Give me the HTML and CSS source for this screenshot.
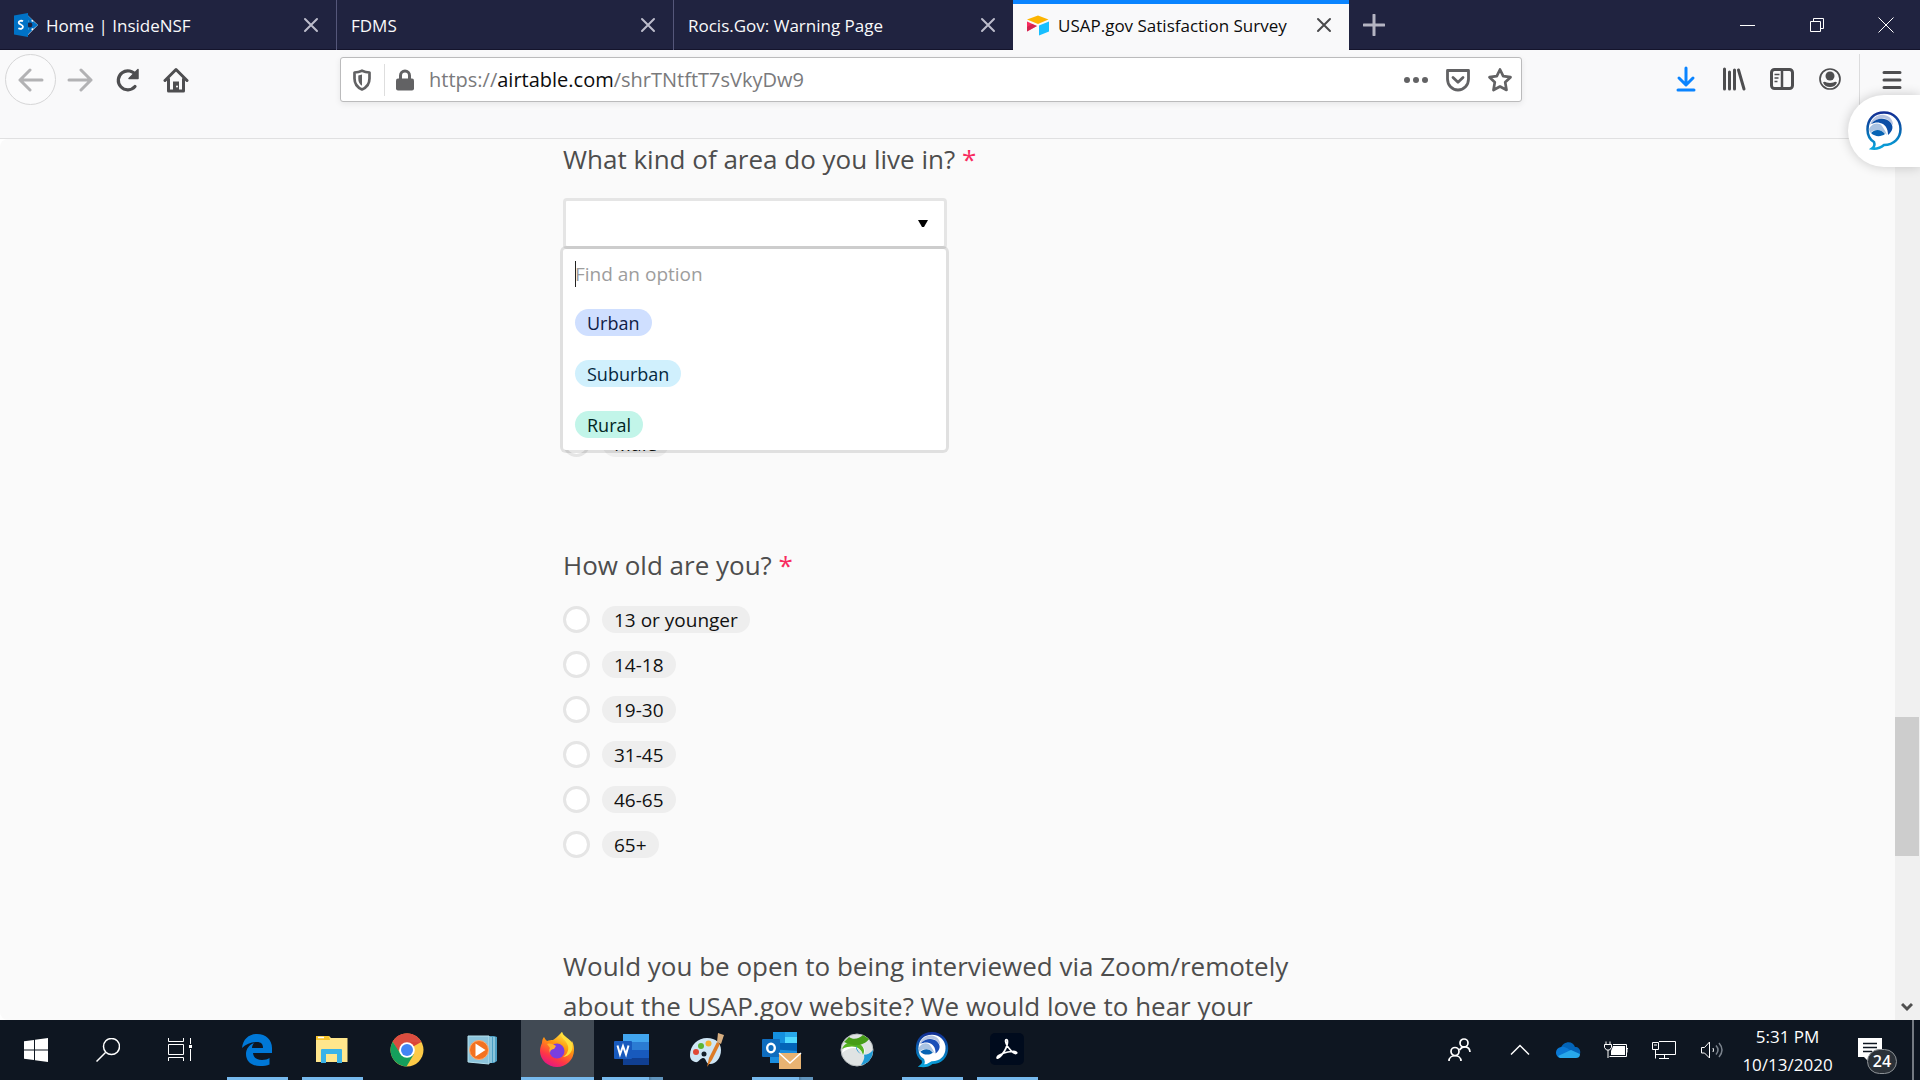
FILE: index.html
```html
<!DOCTYPE html>
<html lang="en">
<head>
<meta charset="utf-8">
<title>USAP.gov Satisfaction Survey</title>
<link rel="stylesheet" href="styles.css">
</head>
<body>
<header class="tabbar">
  <div class="tab">
    <svg class="favicon" viewBox="0 0 24 24"><path d="M14 2.500L24 12 14 22z" fill="#fff"/><path d="M14 2.500l4 4-1.500 3-2.500-2zM14 21.500l4-4-1.500-3-2.500 2zM19 8l5 4-5 4z" fill="#0072c6"/><circle cx="16" cy="12" r="3.200" fill="#20233f" stroke="#0072c6" stroke-width="1.500"/><path d="M0 2.500L14 0v24L0 21.500z" fill="#0072c6"/><path d="M9 8.300C7.500 7.300 4.600 7.600 4.700 9.600c.1 2.100 4.300 1.800 4.300 4.200 0 2.300-3 2.400-4.600 1.500" fill="none" stroke="#fff" stroke-width="1.800"/></svg>
    <span class="tab-title">Home | InsideNSF</span>
    <button class="tab-close" aria-label="Close tab"><svg width="16" height="16" viewBox="0 0 16 16"><path d="M2 2l12 12M14 2L2 14"/></svg></button>
  </div>
  <div class="tab">
    <span class="tab-title">FDMS</span>
    <button class="tab-close" aria-label="Close tab"><svg width="16" height="16" viewBox="0 0 16 16"><path d="M2 2l12 12M14 2L2 14"/></svg></button>
  </div>
  <div class="tab">
    <span class="tab-title">Rocis.Gov: Warning Page</span>
    <button class="tab-close" aria-label="Close tab"><svg width="16" height="16" viewBox="0 0 16 16"><path d="M2 2l12 12M14 2L2 14"/></svg></button>
  </div>
  <div class="tab tab-active">
    <svg class="favicon" viewBox="0 0 24 24"><path d="M1 6.500L12 2.500l10.500 4L12 11z" fill="#fcb400"/><path d="M13 12.500L23 8.500v10L13 22.500z" fill="#18bfff"/><path d="M1 8.500l10 4.500-10 5.500z" fill="#f82b60"/><path d="M1 18.500V14l5-3 5 2z" fill="#ba1e45" opacity=".6"/></svg>
    <span class="tab-title">USAP.gov Satisfaction Survey</span>
    <button class="tab-close" aria-label="Close tab"><svg width="16" height="16" viewBox="0 0 16 16"><path d="M2 2l12 12M14 2L2 14"/></svg></button>
  </div>
  <button class="new-tab" aria-label="New tab"><svg width="22" height="22" viewBox="0 0 22 22"><path d="M11 1v20M1 11h20" stroke="#b4b4c2" stroke-width="3" stroke-linecap="round"/></svg></button>
  <div class="window-controls">
    <button aria-label="Minimize"><svg width="16" height="16" viewBox="0 0 16 16"><path d="M0 8.500h15"/></svg></button>
    <button aria-label="Restore"><svg width="16" height="16" viewBox="0 0 16 16"><path d="M1.500 4.500h10v10h-10zM4.500 4.500v-3h10v10h-3"/></svg></button>
    <button aria-label="Close"><svg width="16" height="16" viewBox="0 0 16 16"><path d="M.5 .5l15 15M15.500 .5l-15 15"/></svg></button>
  </div>
</header>

<nav class="toolbar" aria-label="Navigation">
  <div class="nav-buttons">
    <button class="back" aria-label="Back"><svg width="26" height="24" viewBox="0 0 26 24"><path d="M24 12H2M12 2L2 12l10 10"/></svg></button>
    <button class="forward" aria-label="Forward"><svg width="26" height="24" viewBox="0 0 26 24"><path d="M2 12h22M14 2l10 10-10 10"/></svg></button>
    <button aria-label="Reload"><svg width="24" height="24" viewBox="0 0 24 24"><path d="M19 18.500a9.500 9.500 0 1 1 1-11" fill="none" stroke="#4e4e50" stroke-width="3.200" stroke-linecap="round"/><path d="M22 1.500v9h-9z" fill="#4e4e50" stroke="#4e4e50" stroke-width="1.500" stroke-linejoin="round"/></svg></button>
    <button aria-label="Home"><svg width="26" height="26" viewBox="0 0 26 26"><path d="M2 13.500L13 2.500l11 11M5.500 12v12h15V12" fill="none" stroke="#4e4e50" stroke-width="3" stroke-linejoin="round" stroke-linecap="round"/><path d="M10 24v-9.500h6V24z" fill="#4e4e50"/><circle cx="14" cy="19.500" r="1" fill="#fff"/></svg></button>
  </div>
  <div class="urlbar">
    <svg width="20" height="22" viewBox="0 0 20 22"><path d="M2.500 3.500Q6.500 3.200 10 1.700q3.500 1.500 7.500 1.800v6c0 5-3 9-7.500 11-4.500-2-7.500-6-7.500-11z" fill="none" stroke="#626264" stroke-width="2.700" stroke-linejoin="round"/><path d="M10 5.500v11.200c-2.500-1.600-3.700-4-3.700-7V6.500z" fill="#626264"/></svg>
    <span class="url-divider"></span>
    <svg width="20" height="22" viewBox="0 0 20 22"><path d="M5.500 10V6.500a4.500 4.500 0 0 1 9 0V10" fill="none" stroke="#626264" stroke-width="3"/><rect x="1" y="9.500" width="18" height="12" rx="2" fill="#626264"/></svg>
    <div class="url" role="textbox" aria-label="Address" contenteditable="true" spellcheck="false">https://<b>airtable.com</b>/shrTNtftT7sVkyDw9</div>
    <button aria-label="Page actions"><svg width="26" height="24" viewBox="0 0 26 24" fill="#626264"><circle cx="4" cy="12" r="3"/><circle cx="13" cy="12" r="3"/><circle cx="22" cy="12" r="3"/></svg></button>
    <button aria-label="Save to Pocket"><svg width="26" height="24" viewBox="0 0 26 24" fill="none" stroke="#626264" stroke-width="2.800" stroke-linecap="round" stroke-linejoin="round"><path d="M2.500 2.500h21V11c0 6-4.500 11-10.500 11S2.500 17 2.500 11z"/><path d="M8 9.500l5 4.700 5-4.700"/></svg></button>
    <button aria-label="Bookmark"><svg width="26" height="26" viewBox="0 0 26 26"><path d="M13 2.500l3.200 6.700 7.300 1-5.300 5.100 1.300 7.700-6.500-3.500L6.500 23l1.300-7.700L2.500 10.200l7.300-1z" fill="none" stroke="#626264" stroke-width="2.700" stroke-linejoin="round"/></svg></button>
  </div>
  <div class="tools">
    <button aria-label="Downloads"><svg width="22" height="26" viewBox="0 0 22 26" fill="none" stroke="#0a84ff" stroke-width="3" stroke-linecap="round" stroke-linejoin="round"><path d="M11 2v16M4 12l7 7 7-7M3 24h16"/></svg></button>
    <button aria-label="Library"><svg width="24" height="24" viewBox="0 0 24 24" fill="none" stroke="#4e4e50" stroke-width="3" stroke-linecap="round"><path d="M2.500 2v20M7.500 5v17M12.500 3v19M16.500 3l5.500 19"/></svg></button>
    <button aria-label="Sidebars"><svg width="26" height="24" viewBox="0 0 26 24" fill="none" stroke="#4e4e50"><rect x="2.500" y="2.500" width="21" height="19" rx="3" stroke-width="3"/><path d="M13 2v20" stroke-width="2.500"/><path d="M5.500 7.500h5M5.500 11h4M5.500 14.500h3" stroke-width="1.500"/></svg></button>
    <button aria-label="Account"><svg width="24" height="24" viewBox="0 0 24 24"><circle cx="12" cy="12" r="10" fill="none" stroke="#4e4e50" stroke-width="1.700"/><circle cx="12" cy="9" r="4.500" fill="#4e4e50"/><path d="M5 15.500c2-2 3 .5 7 .5s5-2.500 7-.5c-1 3-4 4.500-7 4.500s-6-1.500-7-4.500z" fill="#4e4e50"/></svg></button>
    <button class="menu" aria-label="Menu"><svg width="20" height="20" viewBox="0 0 20 20" stroke="#4e4e50" stroke-width="3" stroke-linecap="round"><path d="M2 2.500h16M2 10h16M2 17.500h16"/></svg></button>
  </div>
  <button class="chat-widget" aria-label="Open chat">
    <svg width="36" height="40" viewBox="0 0 36 40"><defs><linearGradient id="jab" x1="0" y1="0" x2="0" y2="1"><stop offset="0" stop-color="#132f95"/><stop offset=".5" stop-color="#0763ae"/><stop offset="1" stop-color="#0aa5dd"/></linearGradient></defs><path d="M8 31C3 28 1.500 23 1.500 18.500 1.500 8 8 1.500 18 1.500S34.500 9 34.500 18 28 34 18 34c-3 2.500-8 4-12 3.500 2-1.500 3-4 2-6.500z" fill="#fff" stroke="url(#jab)" stroke-width="2.500"/><path d="M4 14C6 7 12 3 18 4c6 1 9 5 9 10l-5-5C17 6 9 8 4 14z" fill="#b5c3e2"/><path d="M5 13c5-6 14-7 19-2 4 4 3 9-2 13 0-7-3-11-8-12-3-1-6 0-9 1z" fill="#0b4ea6"/><path d="M3 18c3-6 10-7 13-3 2 3 4 6 5 9-3-3-6-5-10-5-3 0-5 1-7 3z" fill="#a9c3e2"/><path d="M5 22c4-4 10-4 14 1-4 3-10 3-14-1z" fill="#0764b4"/></svg>
  </button>
</nav>

<div class="viewport">
  <main class="page">
    <form class="survey">
      <section class="question">
        <h2 id="area-title">What kind of area do you live in? <span class="required">*</span></h2>
        <div class="picker">
          <button type="button" class="picker-button" aria-labelledby="area-title" aria-expanded="true"><svg width="10" height="7" viewBox="0 0 10 7"><path d="M0 0h10L6 7H4z" fill="#000"/></svg></button>
          <div class="picker-menu">
            <input class="picker-search" type="text" placeholder="Find an option" aria-label="Find an option">
            <span class="cursor"></span>
            <ul>
              <li><button type="button" class="pill urban">Urban</button></li>
              <li><button type="button" class="pill suburban">Suburban</button></li>
              <li><button type="button" class="pill rural">Rural</button></li>
            </ul>
          </div>
        </div>
      </section>
      <section class="question covered">
        <label class="option"><input type="radio" name="gender"><span class="pill">Male</span></label>
      </section>
      <section class="question">
        <h2>How old are you? <span class="required">*</span></h2>
        <div class="options">
          <label class="option"><input type="radio" name="age"><span class="pill">13 or younger</span></label>
          <label class="option"><input type="radio" name="age"><span class="pill">14-18</span></label>
          <label class="option"><input type="radio" name="age"><span class="pill">19-30</span></label>
          <label class="option"><input type="radio" name="age"><span class="pill">31-45</span></label>
          <label class="option"><input type="radio" name="age"><span class="pill">46-65</span></label>
          <label class="option"><input type="radio" name="age"><span class="pill">65+</span></label>
        </div>
      </section>
      <section class="question">
        <h2>Would you be open to being interviewed via Zoom/remotely about the USAP.gov website? We would love to hear your</h2>
      </section>
    </form>
  </main>
  <div class="scrollbar">
    <div class="scroll-thumb"></div>
    <svg width="12" height="10" viewBox="0 0 12 10"><path d="M1 2l5 5 5-5" fill="none" stroke="#505050" stroke-width="3"/></svg>
  </div>
</div>

<footer class="taskbar">
  <div class="system-buttons">
    <button aria-label="Start"><svg width="24" height="24" viewBox="0 0 24 24" fill="#fff"><path d="M0 3.300L10 2v9.500H0zM11 1.800L24 0v11.500H11zM0 12.500h10V22L0 20.700zM11 12.500h13V24l-13-1.800z"/></svg></button>
    <button aria-label="Search"><svg width="24" height="24" viewBox="0 0 24 24" fill="none" stroke="#fff" stroke-width="1.500"><circle cx="15.500" cy="8.500" r="8"/><path d="M9.500 14.500L.5 23.500"/></svg></button>
    <button aria-label="Task view"><svg width="24" height="24" viewBox="0 0 24 24" fill="none" stroke="#fff"><path d="M.5 0v3.500h15V0M.5 6.500h15v10h-15zM.5 23v-3.500h15V23M22.500 0v6M22.500 11v12"/><path d="M21 7h3v3h-3z" fill="#fff" stroke="none"/></svg></button>
  </div>
  <div class="apps">
    <button class="app running" aria-label="Edge"><svg width="32" height="34" viewBox="0 0 32 34"><path d="M1 15C2 6 8 1 16 1c9 0 15 6 15 14v5H12c.5 5 4 7 9 7 3 0 6-1 7.500-2v6.500C26 32.500 23 33 19 33 10 33 5 28 5 21c0-5 3-9 8-11-1 1-2 3-2 5h11c0-4-2-6-6-6-6 0-11 2-15 6z" fill="#0078d7"/></svg></button>
    <button class="app running" aria-label="File Explorer"><svg width="34" height="30" viewBox="0 0 34 30"><path d="M1 1h13l2 2h16.500v24H1z" fill="#ffe68c"/><path d="M1 1h13l1 4H1z" fill="#f8c52c"/><path d="M3 2.500h6" stroke="#fff" stroke-width="1.500"/><path d="M6 15q0-1 1-1h19q1 0 1 1v13h-5v-9H11v9H6z" fill="#3ab3e8"/></svg></button>
    <button class="app" aria-label="Chrome"><svg width="34" height="34" viewBox="0 0 34 34"><circle cx="17" cy="17" r="16.500" fill="#fcca47"/><path d="M17 17L2.700 8.700A16.500 16.500 0 0 1 31.300 9z" fill="#db4437"/><path d="M17 9h14.500a16.500 16.500 0 0 0-28.800-.300L8 18z" fill="#db4d40"/><path d="M2.700 8.700A16.500 16.500 0 0 0 16.500 33.500L24 21l-7 3-7-4z" fill="#159f5c"/><circle cx="17" cy="17" r="7.800" fill="#fff"/><circle cx="17" cy="17" r="6" fill="#4285f4"/></svg></button>
    <button class="app" aria-label="Media Player"><svg width="30" height="30" viewBox="0 0 30 30"><path d="M8 1h19l3 1v24l-3 2H8z" fill="#4d9fc4"/><path d="M24 2v26M27 2v25" stroke="#c8ebf5"/><path d="M1 1h21v28L1 27z" fill="#8cc4dc" stroke="#b6e1ee"/><circle cx="12" cy="15" r="9.500" fill="#f37221" stroke="#ffad71"/><path d="M8.500 8.500l10 6.500-10 6.500z" fill="#fff"/></svg></button>
    <button class="app running active" aria-label="Firefox"><svg width="36" height="36" viewBox="0 0 36 36"><defs><linearGradient id="fox" x1=".8" y1="0" x2=".3" y2="1"><stop offset="0" stop-color="#fff44f"/><stop offset=".4" stop-color="#ff980e"/><stop offset=".75" stop-color="#ff3647"/><stop offset="1" stop-color="#e31587"/></linearGradient></defs><path d="M3 11c0-3 1-5 2-6 1 2 2 3 3 4 2-1 4-1 6-1 2-1 4-3 9-8 1 4 6 6 8 10l1 1 1-2c2 4 2 7 2 9 0 10-8 17-17 17S1 28 1 19c0-3 1-6 2-8z" fill="url(#fox)"/><circle cx="18" cy="19" r="7.500" fill="#7a3ee0"/><path d="M8 12c4-1 6 0 9 2l-2 3c-2 0-4 1-4 4-1-2-1-4 0-5z" fill="#ffb02e"/><path d="M23 0c-4 5 5 8 6 14 1 4-1 9-5 11 7-1 11-7 9-14C31 6 24 5 23 0z" fill="#ffdf3c"/></svg></button>
    <button class="app running stacked" aria-label="Word"><svg width="36" height="34" viewBox="0 0 36 34"><path d="M9 1h26v8H9z" fill="#41a5ee"/><path d="M9 9h26v8H9z" fill="#2b7cd3"/><path d="M9 17h26v8H9z" fill="#185abd"/><path d="M9 25h26v7H9z" fill="#103f91"/><rect y="8" width="18" height="18" rx="1" fill="#185abd"/><path d="M3.500 12.500l2.500 9 3-8.500 3 8.500 2.500-9" fill="none" stroke="#fff" stroke-width="2"/></svg></button>
    <button class="app" aria-label="Paint"><svg width="36" height="36" viewBox="0 0 36 36"><path d="M1 23C1 13 9 6 18 6c9 0 14 5 14 12 0 8-5 14-11 14-5 0-3-6-7-6-3 0-4 5-8 4-3-1-5-3-5-7z" fill="#cfe6f5"/><circle cx="7" cy="20" r="3" fill="#e04836"/><circle cx="12" cy="14" r="3" fill="#5cb531"/><circle cx="19.500" cy="11.500" r="3" fill="#f5b12f"/><circle cx="15" cy="22" r="2.500" fill="#13202c"/><path d="M18 35l2-9 8-16 3 2-8 16z" fill="#dc7b26"/><path d="M28 10l1-9 6 2-3 9z" fill="#d7ae80"/></svg></button>
    <button class="app running stacked" aria-label="Outlook"><svg width="40" height="38" viewBox="0 0 40 38"><path d="M11 1h12v11H11z" fill="#1490df"/><path d="M23 1h12v11H23z" fill="#28a8ea"/><path d="M11 12h24v11H11z" fill="#0364b8"/><path d="M23 6h12v6H23z" fill="#50d9ff"/><path d="M8 18l27 2v12H8z" fill="#1a8ee0"/><rect y="8" width="18" height="18" rx="1" fill="#0f6cbd"/><ellipse cx="9" cy="17" rx="3.800" ry="4.300" fill="none" stroke="#fff" stroke-width="2.400"/><path d="M17 22h22v16H17z" fill="#e8b372"/><path d="M17 22l11 10 11-10" fill="none" stroke="#fff" stroke-width="1.500"/></svg></button>
    <button class="app" aria-label="AnyConnect"><svg width="34" height="34" viewBox="0 0 34 34"><circle cx="17" cy="17" r="16" fill="#dfe3e3" stroke="#b8bdbe"/><path d="M2 20C4 11 13 8 21 12c4 2 5 7 2 11-1-9-12-11-21-3z" fill="#fff"/><path d="M2 16C5 9 14 6 20 11c4 3 5 7 3 11-2-8-10-11-21-6z" fill="#55b321"/><path d="M4 9l5-5c4 3 10 2 14-2l6 4C24 13 14 14 4 9z" fill="#469d18"/><path d="M16 12c2 11 10 13 17 5 0 8-5 14-12 15 2-3 4-7 3-10-5-1-9-5-8-10z" fill="#219ad5"/></svg></button>
    <button class="app running" aria-label="Jabber"><svg width="34" height="36" viewBox="0 0 36 40"><path d="M8 31C3 28 1.500 23 1.500 18.500 1.500 8 8 1.500 18 1.500S34.500 9 34.500 18 28 34 18 34c-3 2.500-8 4-12 3.500 2-1.500 3-4 2-6.500z" fill="#fff" stroke="url(#jab)" stroke-width="3"/><path d="M4 14C6 7 12 3 18 4c6 1 9 5 9 10l-5-5C17 6 9 8 4 14z" fill="#b5c3e2"/><path d="M5 13c5-6 14-7 19-2 4 4 3 9-2 13 0-7-3-11-8-12-3-1-6 0-9 1z" fill="#1a4fb8"/><path d="M3 18c3-6 10-7 13-3 2 3 4 6 5 9-3-3-6-5-10-5-3 0-5 1-7 3z" fill="#a9c3e2"/><path d="M5 22c4-4 10-4 14 1-4 3-10 3-14-1z" fill="#0764b4"/></svg></button>
    <button class="app running" aria-label="Acrobat"><svg width="34" height="34" viewBox="0 0 34 34"><rect width="34" height="32" rx="5" fill="#000b1d"/><path d="M8 25c4-2 10-11 9.500-17-.3-2-2-2-2 0C16 13 23 21 26 20.500c2-.5 0-2.500-4-2C16 19 10 21.500 8 23c-1.500 1.500-1 2.500 0 2z" fill="none" stroke="#fff" stroke-width="1.700"/></svg></button>
  </div>
  <div class="tray">
    <button class="people" aria-label="People"><svg width="24" height="24" viewBox="0 0 24 24" fill="none" stroke="#fff" stroke-width="1.700"><circle cx="16" cy="5" r="4"/><circle cx="7" cy="13.500" r="4"/><path d="M1 23c0-7 12-7 12 0M11.500 12c3-5 10-4 10.500 2"/></svg></button>
    <button aria-label="Show hidden icons"><svg width="20" height="12" viewBox="0 0 20 12"><path d="M1 10.500l9-9 9 9" fill="none" stroke="#fff" stroke-width="1.500"/></svg></button>
    <button aria-label="OneDrive"><svg width="26" height="18" viewBox="0 0 26 18"><path d="M6 7c2-7 12-8 14-1 4 0 6 3 5 7L10 12z" fill="#0364b8"/><path d="M6 6c4-1 7 2 12 5L5 17C-1 15 0 7 6 6z" fill="#0a78d4"/><path d="M3 15L16 9l9 4c0 3-2 4-4 4H5z" fill="#28a8ea"/></svg></button>
    <button aria-label="Battery"><svg width="24" height="18" viewBox="0 0 24 18" fill="none" stroke="#fff"><path d="M9 3.500h13.500v12h-17M23 7.500h1v4"/><path d="M9 5h12v9H7v-4z" fill="#fff" stroke="none"/><path d="M2 .5v3M6 .5v3M.5 3.500h7v3l-2 2.500h-3L.5 6.500zM4 9v8"/></svg></button>
    <button aria-label="Network"><svg width="24" height="18" viewBox="0 0 24 18" fill="none" stroke="#fff"><path d="M7 .5h16.500v13h-20M7 17.500h10M12.500 13.500v4M.5 1.500h6v7h-6zM3.500 8.500v9M2 4h3"/></svg></button>
    <button aria-label="Volume"><svg width="24" height="20" viewBox="0 0 24 20" fill="none" stroke="#fff"><path d="M1.500 7.500h3L9.500 2v16l-5-5h-3z"/><path d="M13 8q1 2 0 4"/><path d="M16 5.500q4 4.500 0 9M19 3q6 7 0 14" stroke="#7a828c" stroke-width="1.500"/></svg></button>
    <time class="clock"><span>5:31 PM</span><span>10/13/2020</span></time>
    <button class="notifications" aria-label="Notifications"><svg width="24" height="24" viewBox="0 0 24 24"><path d="M0 0h24v19H10v4l-4-4H0z" fill="#fff"/><path d="M5 5.500h14M5 9.500h14M5 13.500h9" stroke="#0e1621" stroke-width="1.300"/></svg><span class="badge">24</span></button>
    <button class="show-desktop" aria-label="Show desktop"></button>
  </div>
</footer>
</body>
</html>
```

FILE: styles.css
```css
* { box-sizing: border-box; }
body {
  margin: 0;
  height: 100vh;
  display: flex;
  flex-direction: column;
  overflow: hidden;
  background: #fff;
  font-family: "Open Sans", "Noto Sans", sans-serif;
}
button {
  border: 0;
  padding: 0;
  background: none;
  color: inherit;
  font: inherit;
  display: flex;
  align-items: center;
  justify-content: center;
  flex: none;
}
svg { flex: none; display: block; }

/* Tab strip */
.tabbar {
  display: flex;
  flex: none;
  height: 50px;
  background: #202340;
  box-shadow: inset 0 -1px #14142c;
  color: #f9f9fa;
  font-size: 17px;
}
.tab {
  display: flex;
  align-items: center;
  width: 337px;
  padding: 0 17px 0 14px;
  border-right: 1px solid #55577a;
}
.tab:nth-child(3) { width: 339px; border-right: 0; }
.tab-active {
  width: 336px;
  background: #f9f9fa;
  border-top: 4px solid #0a84ff;
  border-right: 0;
  padding: 0 17px 4px 13px;
  color: #0c0c0d;
}
.favicon { width: 24px; height: 24px; margin-right: 8px; }
.tab-title { flex: 1; white-space: nowrap; }
.tab-close svg { stroke: #bcbccb; stroke-width: 2; stroke-linecap: round; }
.tab-active .tab-close svg { stroke: #4a4a4c; }
.new-tab { width: 50px; }
.window-controls { display: flex; margin-left: auto; }
.window-controls button { width: 69px; }
.window-controls svg { fill: none; stroke: #fff; }

/* Navigation toolbar */
.toolbar {
  position: relative;
  display: flex;
  flex: none;
  align-items: flex-start;
  justify-content: space-between;
  height: 89px;
  padding-top: 4px;
  background: #f9f9fa;
  border-bottom: 1px solid #e0e0e1;
}
.nav-buttons { display: flex; align-items: center; width: 340px; padding-left: 5px; }
.nav-buttons button { width: 48px; height: 50px; }
.nav-buttons .back { width: 51px; height: 51px; border: 1px solid #d6d6d7; border-radius: 50%; background: #fbfbfc; }
.back svg, .forward svg { fill: none; stroke: #b2b2b4; stroke-width: 3; stroke-linecap: round; stroke-linejoin: round; }
.urlbar {
  display: flex;
  align-items: center;
  flex: 1;
  height: 45px;
  margin: 3px 0 0;
  padding: 0 8px 0 11px;
  background: #fff;
  border: 1px solid #bbbbbc;
  border-radius: 3px;
  box-shadow: 0 2px 6px rgba(0, 0, 0, .08);
}
.url-divider { width: 1px; height: 32px; margin: 0 10px 0 12px; background: #dedede; }
.url { flex: 1; margin-left: 14px; color: #7a7a7c; font-size: 20px; white-space: nowrap; }
.url b { color: #0c0c0d; font-weight: 400; }
.urlbar button { width: 42px; height: 40px; }
.urlbar button:last-child { width: 26px; margin-left: 8px; }
.tools { display: flex; width: 398px; padding-left: 140px; }
.tools button { width: 48px; height: 50px; }
.tools .menu { width: 64px; height: 84px; margin-left: 5px; padding-bottom: 32px; border-left: 1px solid #dcdcdd; }
.chat-widget {
  position: absolute;
  top: 45px;
  right: 0;
  z-index: 3;
  width: 72px;
  height: 72px;
  padding-right: 1px;
  border-radius: 36px 0 0 36px;
  background: #fff;
  box-shadow: 0 0 12px rgba(0, 0, 0, .2);
}

/* Web page */
.viewport { display: flex; flex: 1; min-height: 0; }
.page { flex: 1; overflow: hidden; background: #fafafa; border-radius: 8px 0 0 8px; }
.survey { width: 769px; max-width: 100%; margin: 0 auto; }
.question { margin-bottom: 88px; }
h2 { margin: 0 0 19px; color: #4d4d4d; font-size: 26px; font-weight: 400; line-height: 40px; }
.required { color: #f82b60; }
.picker { position: relative; width: 384px; }
.picker-button {
  width: 100%;
  height: 51px;
  padding-right: 16px;
  justify-content: flex-end;
  background: #fff;
  border: 3px solid #e5e5e5;
  border-radius: 4px;
}
.picker-menu {
  position: absolute;
  top: 48px;
  left: -3px;
  z-index: 2;
  width: 389px;
  padding: 0 12px 12px;
  background: #fff;
  background-clip: padding-box;
  border: 3px solid rgba(0, 0, 0, .1);
  border-radius: 6px;
}
.picker-search {
  width: 100%;
  height: 50px;
  padding: 0;
  border: 0;
  outline: 0;
  background: none;
  font: inherit;
  font-size: 19px;
}
.picker-search::placeholder { color: #9d9d9d; opacity: 1; }
.cursor { position: absolute; top: 12px; left: 12px; width: 1px; height: 26px; background: #222; }
.picker-menu ul { display: grid; gap: 24px; margin: 0; padding: 10px 0 0; list-style: none; }
.pill {
  height: 27px;
  padding: 0 12px;
  border-radius: 14px;
  background: #eee;
  color: #111;
  font-size: 18px;
  line-height: 28px;
}
.option .pill { font-size: 19px; }
.urban { background: #cfdfff; color: #102046; }
.suburban { background: #d0f0fd; color: #04283f; }
.rural { background: #c2f5e9; color: #012524; }
.covered { padding-top: 93px; }
.options { display: grid; gap: 18px; }
.question .options { margin-top: 21px; }
.option { display: flex; gap: 12px; }
.option input {
  appearance: none;
  width: 27px;
  height: 27px;
  margin: 0;
  border: 3px solid #e5e5e5;
  border-radius: 50%;
  background: #fff;
}
.scrollbar {
  display: flex;
  flex-direction: column;
  align-items: center;
  width: 25px;
  padding: 578px 1px 8px 0;
  background: #f0f0f0;
}
.scroll-thumb { width: 100%; height: 139px; margin-bottom: auto; background: #cdcdcd; }

/* Taskbar */
.taskbar { display: flex; flex: none; height: 60px; background: #0e1621; color: #fff; }
.system-buttons { display: flex; margin-right: 4px; }
.system-buttons button { width: 72px; }
.apps { display: flex; }
.app { width: 73px; margin: 0 1px; padding-right: 2px; border: solid transparent; border-width: 0 6px; }
.running { background: linear-gradient(#76b9ed, #76b9ed) bottom / 100% 3px no-repeat; }
.stacked { background: linear-gradient(90deg, #76b9ed 47px, #4a789c 47px, #5f93bc 50px) bottom / 100% 3px no-repeat; }
.active { border: 0; background: linear-gradient(#76b9ed, #76b9ed) bottom / 100% 3px no-repeat #414a54; }
.tray { display: flex; margin-left: auto; }
.tray button { width: 48px; }
.tray .people { width: 72px; }
.clock {
  display: flex;
  flex-direction: column;
  width: 106px;
  padding: 3px 3px 0 0;
  text-align: center;
  font-size: 17px;
  line-height: 28px;
}
.tray .notifications { position: relative; width: 56px; }
.badge {
  position: absolute;
  top: 29px;
  left: 25px;
  width: 30px;
  height: 25px;
  border: 1px solid #8c9196;
  border-radius: 13px;
  background: #2b3138;
  font-size: 16px;
  font-weight: 600;
  line-height: 23px;
}
.tray .show-desktop { width: 8px; margin-left: 14px; border-left: 2px solid #747a82; }
```
